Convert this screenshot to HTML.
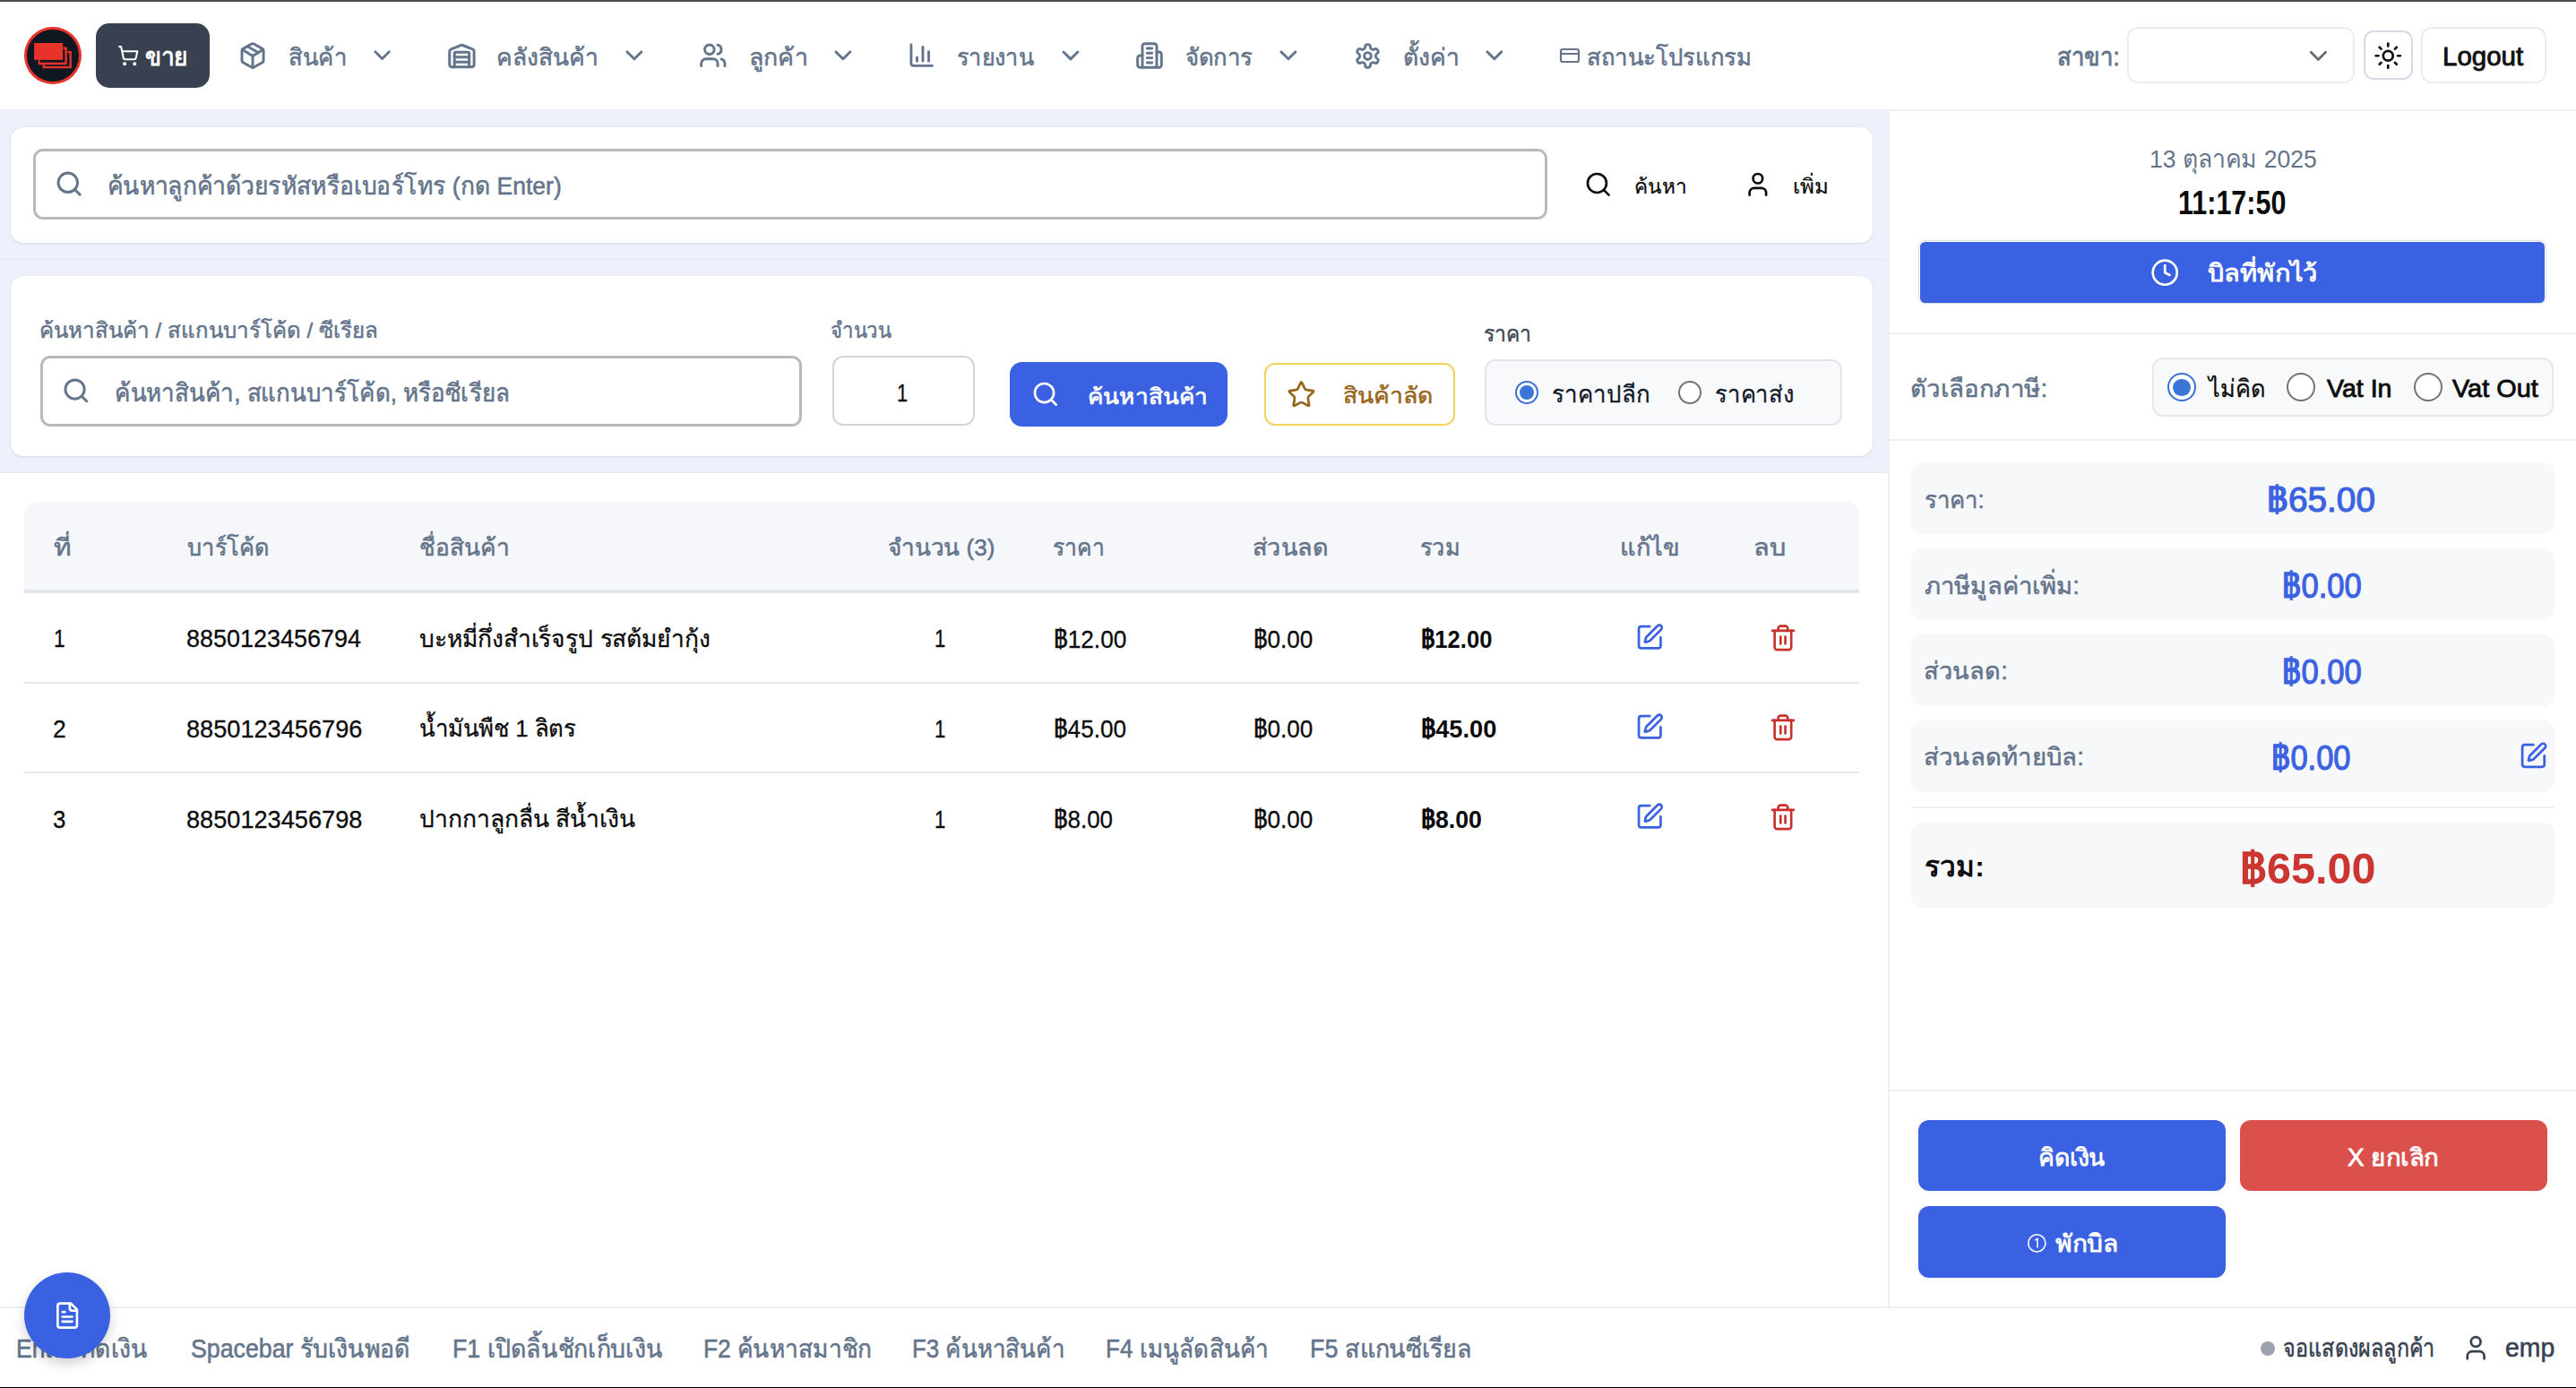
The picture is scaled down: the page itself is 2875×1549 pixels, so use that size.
<!DOCTYPE html>
<html lang="th"><head><meta charset="utf-8"><title>POS</title>
<style>
html,body{margin:0;padding:0}
body{width:2875px;height:1549px;position:relative;overflow:hidden;background:#fff;font-family:"Liberation Sans",sans-serif}
body>div,body>svg,body>p{position:absolute;margin:0}
p{line-height:120px;white-space:nowrap;transform-origin:0 0}
</style></head><body>
<div style="left:0px;top:0px;width:2875px;height:2px;background:#4d4d4d"></div>
<div style="left:0px;top:2px;width:2875px;height:120px;background:#fff"></div>
<div style="left:0px;top:122px;width:2875px;height:2px;background:#eceff4"></div>
<div style="left:0px;top:124px;width:2107px;height:403.5px;background:#eef1fb"></div>
<div style="left:0px;top:288.5px;width:2107px;height:1.0px;background:#e4e8f2"></div>
<div style="left:0px;top:526.5px;width:2107px;height:1.0px;background:#e6eaf3"></div>
<div style="left:12px;top:141.5px;width:2078px;height:129.8px;background:#fff;border-radius:14px;box-shadow:0 1px 3px rgba(30,40,80,.10),0 0 1px rgba(30,40,80,.10)"></div>
<div style="left:12px;top:307.8px;width:2078px;height:201.0px;background:#fff;border-radius:14px;box-shadow:0 1px 3px rgba(30,40,80,.10),0 0 1px rgba(30,40,80,.10)"></div>
<div style="left:2107px;top:124px;width:2px;height:1334.5px;background:#eef0f5"></div>
<div style="left:2109px;top:371px;width:766px;height:2px;background:#eceff5"></div>
<div style="left:2109px;top:490px;width:766px;height:2px;background:#eceff5"></div>
<div style="left:2109px;top:1216px;width:766px;height:2px;background:#eceff5"></div>
<div style="left:0px;top:1458px;width:2875px;height:2px;background:#eef0f4"></div>
<div style="left:0px;top:1547.5px;width:2875px;height:1.5px;background:#000"></div>
<div style="left:27.3px;top:30.1px;width:63.5px;height:63.8px;background:#0f1720;border:3.8px solid #e8322a;border-radius:50%;box-sizing:border-box"></div>
<svg style="left:27px;top:30px" width="64" height="64" viewBox="27 30 64 64"><rect x="38.1" y="48" width="32.1" height="18.9" fill="#e8322a"/><path d="M43.8 67.4 V71 H73.6 V53.8 H70.8" fill="none" stroke="#e8322a" stroke-width="2.4"/><path d="M48.8 72.2 V75.1 H78.7 V58.1 H75.2" fill="none" stroke="#e8322a" stroke-width="2.4"/></svg>
<div style="left:107px;top:25.9px;width:126.8px;height:72.0px;background:#394150;border-radius:15px"></div>
<svg style="left:130.74px;top:49.84px" width="24.33" height="24.33" viewBox="0 0 24 24" fill="none" stroke="#fff" stroke-width="2" stroke-linecap="round" stroke-linejoin="round"><circle cx="8" cy="21" r="1"/><circle cx="19" cy="21" r="1"/><path d="M2.05 2.05h2l2.66 12.42a2 2 0 0 0 2 1.58h9.78a2 2 0 0 0 1.95-1.57l1.65-7.43H5.12"/></svg>
<svg style="left:265.82px;top:45.66px" width="32.1" height="32.1" viewBox="0 0 24 24" fill="none" stroke="#64748b" stroke-width="2.2" stroke-linecap="round" stroke-linejoin="round"><path d="M11 21.73a2 2 0 0 0 2 0l7-4A2 2 0 0 0 21 16V8a2 2 0 0 0-1-1.73l-7-4a2 2 0 0 0-2 0l-7 4A2 2 0 0 0 3 8v8a2 2 0 0 0 1 1.73z"/><path d="M12 22V12"/><path d="m3.3 7 7.703 4.734a2 2 0 0 0 1.994 0L20.7 7"/><path d="m7.5 4.27 9 5.15"/></svg>
<svg style="left:411.11px;top:46.42px" width="31.14" height="31.14" viewBox="0 0 24 24" fill="none" stroke="#64748b" stroke-width="2.2" stroke-linecap="round" stroke-linejoin="round"><path d="m6 9 6 6 6-6"/></svg>
<svg style="left:498.93px;top:46.12px" width="32.87" height="32.87" viewBox="0 0 24 24" fill="none" stroke="#64748b" stroke-width="2.2" stroke-linecap="round" stroke-linejoin="round"><path d="M18 21V10a1 1 0 0 0-1-1H7a1 1 0 0 0-1 1v11"/><path d="M22 19a2 2 0 0 1-2 2H4a2 2 0 0 1-2-2V8.35a2 2 0 0 1 1.26-1.86l8-3.2a2 2 0 0 1 1.48 0l8 3.2A2 2 0 0 1 22 8.35z"/><path d="M6 13h12"/><path d="M6 17h12"/></svg>
<svg style="left:691.88px;top:45.81px" width="31.76" height="31.76" viewBox="0 0 24 24" fill="none" stroke="#64748b" stroke-width="2.2" stroke-linecap="round" stroke-linejoin="round"><path d="m6 9 6 6 6-6"/></svg>
<svg style="left:779.68px;top:46.37px" width="31.58" height="31.58" viewBox="0 0 24 24" fill="none" stroke="#64748b" stroke-width="2.2" stroke-linecap="round" stroke-linejoin="round"><path d="M16 21v-2a4 4 0 0 0-4-4H6a4 4 0 0 0-4 4v2"/><circle cx="9" cy="7" r="4"/><path d="M22 21v-2a4 4 0 0 0-3-3.87"/><path d="M16 3.13a4 4 0 0 1 0 7.75"/></svg>
<svg style="left:925.38px;top:45.81px" width="31.76" height="31.76" viewBox="0 0 24 24" fill="none" stroke="#64748b" stroke-width="2.2" stroke-linecap="round" stroke-linejoin="round"><path d="m6 9 6 6 6-6"/></svg>
<svg style="left:1013.19px;top:46.39px" width="31.32" height="31.32" viewBox="0 0 24 24" fill="none" stroke="#64748b" stroke-width="2.2" stroke-linecap="round" stroke-linejoin="round"><path d="M3 3v16a2 2 0 0 0 2 2h16"/><path d="M18 17V9"/><path d="M13 17V5"/><path d="M8 17v-3"/></svg>
<svg style="left:1178.97px;top:45.79px" width="31.84" height="31.84" viewBox="0 0 24 24" fill="none" stroke="#64748b" stroke-width="2.2" stroke-linecap="round" stroke-linejoin="round"><path d="m6 9 6 6 6-6"/></svg>
<svg style="left:1266.97px;top:45.67px" width="31.96" height="31.96" viewBox="0 0 24 24" fill="none" stroke="#64748b" stroke-width="2.2" stroke-linecap="round" stroke-linejoin="round"><path d="M6 22V4a2 2 0 0 1 2-2h8a2 2 0 0 1 2 2v18Z"/><path d="M6 12H4a2 2 0 0 0-2 2v6a2 2 0 0 0 2 2h2"/><path d="M18 9h2a2 2 0 0 1 2 2v9a2 2 0 0 1-2 2h-2"/><path d="M10 6h4"/><path d="M10 10h4"/><path d="M10 14h4"/><path d="M10 18h4"/></svg>
<svg style="left:1421.88px;top:45.81px" width="31.76" height="31.76" viewBox="0 0 24 24" fill="none" stroke="#64748b" stroke-width="2.2" stroke-linecap="round" stroke-linejoin="round"><path d="m6 9 6 6 6-6"/></svg>
<svg style="left:1510.72px;top:46.51px" width="30.96" height="30.96" viewBox="0 0 24 24" fill="none" stroke="#64748b" stroke-width="2.2" stroke-linecap="round" stroke-linejoin="round"><path d="M12.22 2h-.44a2 2 0 0 0-2 2v.18a2 2 0 0 1-1 1.73l-.43.25a2 2 0 0 1-2 0l-.15-.08a2 2 0 0 0-2.73.73l-.22.38a2 2 0 0 0 .73 2.73l.15.1a2 2 0 0 1 1 1.72v.51a2 2 0 0 1-1 1.74l-.15.09a2 2 0 0 0-.73 2.73l.22.38a2 2 0 0 0 2.73.73l.15-.08a2 2 0 0 1 2 0l.43.25a2 2 0 0 1 1 1.73V20a2 2 0 0 0 2 2h.44a2 2 0 0 0 2-2v-.18a2 2 0 0 1 1-1.73l.43-.25a2 2 0 0 1 2 0l.15.08a2 2 0 0 0 2.73-.73l.22-.39a2 2 0 0 0-.73-2.73l-.15-.08a2 2 0 0 1-1-1.74v-.5a2 2 0 0 1 1-1.74l.15-.09a2 2 0 0 0 .73-2.73l-.22-.38a2 2 0 0 0-2.73-.73l-.15.08a2 2 0 0 1-2 0l-.43-.25a2 2 0 0 1-1-1.73V4a2 2 0 0 0-2-2z"/><circle cx="12" cy="12" r="3"/></svg>
<svg style="left:1652.3px;top:45.84px" width="31.67" height="31.67" viewBox="0 0 24 24" fill="none" stroke="#64748b" stroke-width="2.2" stroke-linecap="round" stroke-linejoin="round"><path d="m6 9 6 6 6-6"/></svg>
<svg style="left:1740.0px;top:49.8px" width="23.99" height="23.99" viewBox="0 0 24 24" fill="none" stroke="#64748b" stroke-width="2.2" stroke-linecap="round" stroke-linejoin="round"><rect width="20" height="14" x="2" y="5" rx="2"/><line x1="2" x2="22" y1="10" y2="10"/></svg>
<div style="left:2373.6px;top:30.4px;width:254.7px;height:63.1px;border:2px solid #eaedf2;border-radius:12px;box-sizing:border-box;background:#fff"></div>
<svg style="left:2571.17px;top:45.56px" width="32.81" height="32.81" viewBox="0 0 24 24" fill="none" stroke="#6b6b6b" stroke-width="2" stroke-linecap="round" stroke-linejoin="round"><path d="m6 9 6 6 6-6"/></svg>
<div style="left:2637.6px;top:34.3px;width:55.0px;height:55.0px;border:2px solid #d5dbe6;border-radius:11px;box-sizing:border-box;background:#fff"></div>
<svg style="left:2648.65px;top:45.65px" width="32.51" height="32.51" viewBox="0 0 24 24" fill="none" stroke="#111" stroke-width="2" stroke-linecap="round" stroke-linejoin="round"><circle cx="12" cy="12" r="4"/><path d="M12 2v2"/><path d="M12 20v2"/><path d="m4.93 4.93 1.41 1.41"/><path d="m17.66 17.66 1.41 1.41"/><path d="M2 12h2"/><path d="M20 12h2"/><path d="m6.34 17.66-1.41 1.41"/><path d="m19.07 4.93-1.41 1.41"/></svg>
<div style="left:2701.6px;top:30.4px;width:140.9px;height:63.1px;border:2px solid #eaedf2;border-radius:12px;box-sizing:border-box;background:#fff"></div>
<div style="left:36.8px;top:166.3px;width:1690.6px;height:79.2px;border:3px solid #b9b9b9;border-radius:11px;box-sizing:border-box;background:#fff"></div>
<svg style="left:60.81px;top:189.31px" width="32.28" height="32.28" viewBox="0 0 24 24" fill="none" stroke="#64748b" stroke-width="2.2" stroke-linecap="round" stroke-linejoin="round"><circle cx="11" cy="11" r="8"/><path d="m21 21-4.3-4.3"/></svg>
<svg style="left:1768.17px;top:189.88px" width="31.5" height="31.5" viewBox="0 0 24 24" fill="none" stroke="#0b0b0b" stroke-width="2" stroke-linecap="round" stroke-linejoin="round"><circle cx="11" cy="11" r="8"/><path d="m21 21-4.3-4.3"/></svg>
<svg style="left:1945.71px;top:190.16px" width="31.72" height="31.72" viewBox="0 0 24 24" fill="none" stroke="#0b0b0b" stroke-width="2" stroke-linecap="round" stroke-linejoin="round"><path d="M19 21v-2a4 4 0 0 0-4-4H9a4 4 0 0 0-4 4v2"/><circle cx="12" cy="7" r="4"/></svg>
<div style="left:45.1px;top:396.6px;width:849.9px;height:79.0px;border:3px solid #b9b9b9;border-radius:11px;box-sizing:border-box;background:#fff"></div>
<svg style="left:68.85px;top:420.05px" width="31.8" height="31.8" viewBox="0 0 24 24" fill="none" stroke="#64748b" stroke-width="2.2" stroke-linecap="round" stroke-linejoin="round"><circle cx="11" cy="11" r="8"/><path d="m21 21-4.3-4.3"/></svg>
<div style="left:928.5px;top:396.7px;width:159.2px;height:78.2px;border:2px solid #d1d5db;border-radius:12px;box-sizing:border-box;background:#fff"></div>
<div style="left:1126.9px;top:404px;width:243.1px;height:71.9px;background:#3961e1;border-radius:14px;box-shadow:0 1px 2px rgba(0,0,0,.08)"></div>
<svg style="left:1151.06px;top:424.16px" width="31.68" height="31.68" viewBox="0 0 24 24" fill="none" stroke="#fff" stroke-width="2" stroke-linecap="round" stroke-linejoin="round"><circle cx="11" cy="11" r="8"/><path d="m21 21-4.3-4.3"/></svg>
<div style="left:1410.7px;top:404.8px;width:213.6px;height:70.2px;border:2px solid #f2d35e;border-radius:12px;box-sizing:border-box;background:#fff"></div>
<svg style="left:1435.53px;top:423.5px" width="32.79" height="32.79" viewBox="0 0 24 24" fill="none" stroke="#97661c" stroke-width="2" stroke-linecap="round" stroke-linejoin="round"><path d="M11.525 2.295a.53.53 0 0 1 .95 0l2.31 4.679a2.123 2.123 0 0 0 1.595 1.16l5.166.756a.53.53 0 0 1 .294.904l-3.736 3.638a2.123 2.123 0 0 0-.611 1.878l.882 5.14a.53.53 0 0 1-.771.56l-4.618-2.428a2.122 2.122 0 0 0-1.973 0L6.396 21.01a.53.53 0 0 1-.77-.56l.881-5.139a2.122 2.122 0 0 0-.611-1.879L2.16 9.795a.53.53 0 0 1 .294-.906l5.165-.755a2.122 2.122 0 0 0 1.597-1.16z"/></svg>
<div style="left:1657.4px;top:400.6px;width:399.1px;height:74.4px;border:2px solid #e3e5ea;border-radius:12px;box-sizing:border-box;background:#f8f9fb"></div>
<div style="left:1691px;top:425px;width:26.2px;height:26.2px;border:2px solid #3b6fd6;border-radius:50%;box-sizing:border-box;background:#fff"></div><div style="left:1696.11px;top:430.11px;width:15.98px;height:15.98px;background:#3b76d6;border-radius:50%"></div>
<div style="left:1873px;top:425px;width:26.2px;height:26.2px;border:2px solid #737373;border-radius:50%;box-sizing:border-box;background:#fff"></div>
<div style="left:27px;top:560px;width:2048px;height:98.3px;background:#f5f7fa;border-radius:14px 14px 0 0"></div>
<div style="left:27px;top:658.3px;width:2048px;height:3.7px;background:#e2e7ef"></div>
<div style="left:27px;top:761px;width:2048px;height:2px;background:#e3e7ee"></div>
<div style="left:27px;top:861px;width:2048px;height:2px;background:#e3e7ee"></div>
<svg style="left:1825.19px;top:694.84px" width="32.47" height="32.47" viewBox="0 0 24 24" fill="none" stroke="#3a62e0" stroke-width="2" stroke-linecap="round" stroke-linejoin="round"><path d="M12 3H5a2 2 0 0 0-2 2v14a2 2 0 0 0 2 2h14a2 2 0 0 0 2-2v-7"/><path d="M18.375 2.625a1 1 0 0 1 3 3l-9.013 9.014a2 2 0 0 1-.853.505l-2.873.84a.5.5 0 0 1-.62-.62l.84-2.873a2 2 0 0 1 .506-.852z"/></svg>
<svg style="left:1974.25px;top:695.67px" width="31.8" height="31.8" viewBox="0 0 24 24" fill="none" stroke="#c9302c" stroke-width="2" stroke-linecap="round" stroke-linejoin="round"><path d="M3 6h18"/><path d="M19 6v14c0 1-1 2-2 2H7c-1 0-2-1-2-2V6"/><path d="M8 6V4c0-1 1-2 2-2h4c1 0 2 1 2 2v2"/><line x1="10" x2="10" y1="11" y2="17"/><line x1="14" x2="14" y1="11" y2="17"/></svg>
<svg style="left:1825.19px;top:795.14px" width="32.47" height="32.47" viewBox="0 0 24 24" fill="none" stroke="#3a62e0" stroke-width="2" stroke-linecap="round" stroke-linejoin="round"><path d="M12 3H5a2 2 0 0 0-2 2v14a2 2 0 0 0 2 2h14a2 2 0 0 0 2-2v-7"/><path d="M18.375 2.625a1 1 0 0 1 3 3l-9.013 9.014a2 2 0 0 1-.853.505l-2.873.84a.5.5 0 0 1-.62-.62l.84-2.873a2 2 0 0 1 .506-.852z"/></svg>
<svg style="left:1974.25px;top:795.97px" width="31.8" height="31.8" viewBox="0 0 24 24" fill="none" stroke="#c9302c" stroke-width="2" stroke-linecap="round" stroke-linejoin="round"><path d="M3 6h18"/><path d="M19 6v14c0 1-1 2-2 2H7c-1 0-2-1-2-2V6"/><path d="M8 6V4c0-1 1-2 2-2h4c1 0 2 1 2 2v2"/><line x1="10" x2="10" y1="11" y2="17"/><line x1="14" x2="14" y1="11" y2="17"/></svg>
<svg style="left:1825.19px;top:895.44px" width="32.47" height="32.47" viewBox="0 0 24 24" fill="none" stroke="#3a62e0" stroke-width="2" stroke-linecap="round" stroke-linejoin="round"><path d="M12 3H5a2 2 0 0 0-2 2v14a2 2 0 0 0 2 2h14a2 2 0 0 0 2-2v-7"/><path d="M18.375 2.625a1 1 0 0 1 3 3l-9.013 9.014a2 2 0 0 1-.853.505l-2.873.84a.5.5 0 0 1-.62-.62l.84-2.873a2 2 0 0 1 .506-.852z"/></svg>
<svg style="left:1974.25px;top:896.27px" width="31.8" height="31.8" viewBox="0 0 24 24" fill="none" stroke="#c9302c" stroke-width="2" stroke-linecap="round" stroke-linejoin="round"><path d="M3 6h18"/><path d="M19 6v14c0 1-1 2-2 2H7c-1 0-2-1-2-2V6"/><path d="M8 6V4c0-1 1-2 2-2h4c1 0 2 1 2 2v2"/><line x1="10" x2="10" y1="11" y2="17"/><line x1="14" x2="14" y1="11" y2="17"/></svg>
<div style="left:2141.2px;top:268.2px;width:701.0px;height:71.2px;border:1.2px solid #d9dfe9;border-radius:7px;box-sizing:border-box;background:#fff"></div>
<div style="left:2142.9px;top:269.9px;width:697.6px;height:67.8px;background:#3961e1;border-radius:5.5px"></div>
<svg style="left:2399.65px;top:288.15px" width="32.45" height="32.45" viewBox="0 0 24 24" fill="none" stroke="#fff" stroke-width="2" stroke-linecap="round" stroke-linejoin="round"><circle cx="12" cy="12" r="10"/><polyline points="12 6 12 12 16 14"/></svg>
<div style="left:2401.7px;top:398.5px;width:448.4px;height:66.8px;border:2px solid #e6e8ec;border-radius:12px;box-sizing:border-box;background:#f8f9fb"></div>
<div style="left:2418.9px;top:416.3px;width:32.0px;height:32.0px;border:2px solid #3b6fd6;border-radius:50%;box-sizing:border-box;background:#fff"></div><div style="left:2425.14px;top:422.54px;width:19.52px;height:19.52px;background:#3b76d6;border-radius:50%"></div>
<div style="left:2552px;top:416.3px;width:32px;height:32.0px;border:2px solid #737373;border-radius:50%;box-sizing:border-box;background:#fff"></div>
<div style="left:2693.6px;top:416.3px;width:32.0px;height:32.0px;border:2px solid #737373;border-radius:50%;box-sizing:border-box;background:#fff"></div>
<div style="left:2133px;top:516.4px;width:718px;height:79.2px;background:#f7f8fa;border-radius:12px"></div>
<div style="left:2133px;top:612.4px;width:718px;height:79.2px;background:#f7f8fa;border-radius:12px"></div>
<div style="left:2133px;top:708px;width:718px;height:79.5px;background:#f7f8fa;border-radius:12px"></div>
<div style="left:2133px;top:804px;width:718px;height:79.8px;background:#f7f8fa;border-radius:12px"></div>
<svg style="left:2810.86px;top:827.11px" width="32.88" height="32.88" viewBox="0 0 24 24" fill="none" stroke="#3a62e0" stroke-width="2" stroke-linecap="round" stroke-linejoin="round"><path d="M12 3H5a2 2 0 0 0-2 2v14a2 2 0 0 0 2 2h14a2 2 0 0 0 2-2v-7"/><path d="M18.375 2.625a1 1 0 0 1 3 3l-9.013 9.014a2 2 0 0 1-.853.505l-2.873.84a.5.5 0 0 1-.62-.62l.84-2.873a2 2 0 0 1 .506-.852z"/></svg>
<div style="left:2133px;top:900px;width:718px;height:2px;background:#edf0f6"></div>
<div style="left:2133px;top:918.1px;width:718px;height:95.3px;background:#f7f8fa;border-radius:12px"></div>
<div style="left:2141.1px;top:1250.4px;width:342.9px;height:79.1px;background:#3961e1;border-radius:12px"></div>
<div style="left:2500.1px;top:1250.4px;width:342.9px;height:79.1px;background:#dc504c;border-radius:12px"></div>
<div style="left:2141.1px;top:1346px;width:342.9px;height:79.7px;background:#3961e1;border-radius:12px"></div>
<svg style="left:2262px;top:1376px" width="24" height="24" viewBox="0 0 24 24"><circle cx="11.3" cy="11.4" r="9.6" fill="none" stroke="#fff" stroke-width="1.6"/><path d="M9.3 8.2 L11.9 6.4 V16.6" fill="none" stroke="#fff" stroke-width="1.5"/></svg>
<div style="left:2523px;top:1496.6px;width:16.4px;height:16.4px;background:#9ca3af;border-radius:50%"></div>
<svg style="left:2747.11px;top:1488.0px" width="32.35" height="32.35" viewBox="0 0 24 24" fill="none" stroke="#374151" stroke-width="2" stroke-linecap="round" stroke-linejoin="round"><path d="M19 21v-2a4 4 0 0 0-4-4H9a4 4 0 0 0-4 4v2"/><circle cx="12" cy="7" r="4"/></svg>
<p style="left:321.75px;top:3.70px;font-size:26.4px;font-weight:400;-webkit-text-stroke:0.53px #64748b;color:#64748b;transform:scaleX(0.9730)">สินค้า</p>
<p style="left:554.40px;top:3.70px;font-size:26.4px;font-weight:400;-webkit-text-stroke:0.53px #64748b;color:#64748b;transform:scaleX(1.0000)">คลังสินค้า</p>
<p style="left:835.58px;top:3.70px;font-size:26.4px;font-weight:400;-webkit-text-stroke:0.53px #64748b;color:#64748b;transform:scaleX(1.0115)">ลูกค้า</p>
<p style="left:1068.04px;top:3.70px;font-size:26.4px;font-weight:400;-webkit-text-stroke:0.53px #64748b;color:#64748b;transform:scaleX(0.9551)">รายงาน</p>
<p style="left:1322.65px;top:3.70px;font-size:26.4px;font-weight:400;-webkit-text-stroke:0.53px #64748b;color:#64748b;transform:scaleX(0.9733)">จัดการ</p>
<p style="left:1565.59px;top:3.80px;font-size:26.4px;font-weight:400;-webkit-text-stroke:0.53px #64748b;color:#64748b;transform:scaleX(1.0034)">ตั้งค่า</p>
<p style="left:1771.45px;top:3.80px;font-size:26.4px;font-weight:400;-webkit-text-stroke:0.53px #64748b;color:#64748b;transform:scaleX(0.9761)">สถานะโปรแกรม</p>
<p style="left:2296.38px;top:4.10px;font-size:28.0px;font-weight:400;-webkit-text-stroke:0.84px #64748b;color:#64748b;transform:scaleX(0.9178)">สาขา:</p>
<p style="left:2725.97px;top:3.10px;font-size:29.0px;font-weight:400;-webkit-text-stroke:0.87px #111111;color:#111111;transform:scaleX(1.0161)">Logout</p>
<p style="left:162.07px;top:3.30px;font-size:28.5px;font-weight:700;color:#ffffff;transform:scaleX(0.9265)">ขาย</p>
<p style="left:119.97px;top:148.40px;font-size:27.5px;font-weight:400;-webkit-text-stroke:0.55px #64748b;color:#64748b;transform:scaleX(0.9627)">ค้นหาลูกค้าด้วยรหัสหรือเบอร์โทร (กด Enter)</p>
<p style="left:1823.70px;top:147.60px;font-size:22.7px;font-weight:400;-webkit-text-stroke:0.23px #0b0b0b;color:#0b0b0b;transform:scaleX(0.9982)">ค้นหา</p>
<p style="left:2001.08px;top:147.60px;font-size:22.7px;font-weight:400;-webkit-text-stroke:0.23px #0b0b0b;color:#0b0b0b;transform:scaleX(1.0618)">เพิ่ม</p>
<p style="left:43.80px;top:308.80px;font-size:24.1px;font-weight:400;-webkit-text-stroke:0.48px #64748b;color:#64748b;transform:scaleX(0.9992)">ค้นหาสินค้า / สแกนบาร์โค้ด / ซีเรียล</p>
<p style="left:128.34px;top:378.60px;font-size:27.9px;font-weight:400;-webkit-text-stroke:0.56px #64748b;color:#64748b;transform:scaleX(0.9311)">ค้นหาสินค้า, สแกนบาร์โค้ด, หรือซีเรียล</p>
<p style="left:926.67px;top:308.50px;font-size:24.1px;font-weight:400;-webkit-text-stroke:0.48px #64748b;color:#64748b;transform:scaleX(0.9167)">จำนวน</p>
<p style="left:1001.15px;top:378.70px;font-size:28.0px;font-weight:400;-webkit-text-stroke:0.28px #0b0b0b;color:#0b0b0b;transform:scaleX(0.7750)">1</p>
<p style="left:1213.65px;top:383.00px;font-size:24.3px;font-weight:400;-webkit-text-stroke:0.73px #ffffff;color:#ffffff;transform:scaleX(1.0744)">ค้นหาสินค้า</p>
<p style="left:1499.23px;top:381.30px;font-size:25.0px;font-weight:400;-webkit-text-stroke:0.50px #97661c;color:#97661c;transform:scaleX(1.0659)">สินค้าลัด</p>
<p style="left:1655.85px;top:313.30px;font-size:24.0px;font-weight:400;-webkit-text-stroke:0.48px #434a54;color:#434a54;transform:scaleX(0.9538)">ราคา</p>
<p style="left:1732.20px;top:379.90px;font-size:26.0px;font-weight:400;-webkit-text-stroke:0.26px #111827;color:#111827;transform:scaleX(0.9963)">ราคาปลีก</p>
<p style="left:1914.02px;top:379.90px;font-size:26.0px;font-weight:400;-webkit-text-stroke:0.26px #111827;color:#111827;transform:scaleX(0.9828)">ราคาส่ง</p>
<p style="left:59.67px;top:550.60px;font-size:26.3px;font-weight:400;-webkit-text-stroke:0.53px #64748b;color:#64748b;transform:scaleX(1.1333)">ที่</p>
<p style="left:208.84px;top:550.60px;font-size:26.3px;font-weight:400;-webkit-text-stroke:0.53px #64748b;color:#64748b;transform:scaleX(0.9630)">บาร์โค้ด</p>
<p style="left:467.50px;top:550.60px;font-size:26.3px;font-weight:400;-webkit-text-stroke:0.53px #64748b;color:#64748b;transform:scaleX(0.9979)">ชื่อสินค้า</p>
<p style="left:991.02px;top:550.60px;font-size:26.3px;font-weight:400;-webkit-text-stroke:0.53px #64748b;color:#64748b;transform:scaleX(0.9915)">จำนวน (3)</p>
<p style="left:1175.16px;top:550.60px;font-size:26.3px;font-weight:400;-webkit-text-stroke:0.53px #64748b;color:#64748b;transform:scaleX(0.9390)">ราคา</p>
<p style="left:1398.35px;top:550.60px;font-size:26.3px;font-weight:400;-webkit-text-stroke:0.53px #64748b;color:#64748b;transform:scaleX(1.0244)">ส่วนลด</p>
<p style="left:1584.64px;top:550.60px;font-size:26.3px;font-weight:400;-webkit-text-stroke:0.53px #64748b;color:#64748b;transform:scaleX(0.9628)">รวม</p>
<p style="left:1808.43px;top:550.90px;font-size:26.3px;font-weight:400;-webkit-text-stroke:0.53px #64748b;color:#64748b;transform:scaleX(1.0333)">แก้ไข</p>
<p style="left:1957.31px;top:550.90px;font-size:26.3px;font-weight:400;-webkit-text-stroke:0.53px #64748b;color:#64748b;transform:scaleX(1.0966)">ลบ</p>
<p style="left:60.40px;top:652.40px;font-size:28.5px;font-weight:400;-webkit-text-stroke:0.29px #0b0b0b;color:#0b0b0b;transform:scaleX(0.8000)">1</p>
<p style="left:208.15px;top:652.40px;font-size:28.5px;font-weight:400;-webkit-text-stroke:0.29px #0b0b0b;color:#0b0b0b;transform:scaleX(0.9468)">8850123456794</p>
<p style="left:468.30px;top:653.20px;font-size:26.5px;font-weight:400;-webkit-text-stroke:0.27px #0b0b0b;color:#0b0b0b;transform:scaleX(0.9960)">บะหมี่กึ่งสำเร็จรูป รสต้มยำกุ้ง</p>
<p style="left:1043.05px;top:652.40px;font-size:28.5px;font-weight:400;-webkit-text-stroke:0.29px #0b0b0b;color:#0b0b0b;transform:scaleX(0.7769)">1</p>
<p style="left:1175.66px;top:652.60px;font-size:28.5px;font-weight:400;-webkit-text-stroke:0.29px #0b0b0b;color:#0b0b0b;transform:scaleX(0.9209)">฿12.00</p>
<p style="left:1399.17px;top:652.60px;font-size:28.5px;font-weight:400;-webkit-text-stroke:0.29px #0b0b0b;color:#0b0b0b;transform:scaleX(0.9143)">฿0.00</p>
<p style="left:1585.70px;top:652.60px;font-size:28.5px;font-weight:700;color:#0b0b0b;transform:scaleX(0.8988)">฿12.00</p>
<p style="left:58.97px;top:752.70px;font-size:28.5px;font-weight:400;-webkit-text-stroke:0.29px #0b0b0b;color:#0b0b0b;transform:scaleX(0.9286)">2</p>
<p style="left:208.05px;top:752.70px;font-size:28.5px;font-weight:400;-webkit-text-stroke:0.29px #0b0b0b;color:#0b0b0b;transform:scaleX(0.9529)">8850123456796</p>
<p style="left:468.33px;top:753.40px;font-size:26.5px;font-weight:400;-webkit-text-stroke:0.27px #0b0b0b;color:#0b0b0b;transform:scaleX(0.9725)">น้ำมันพืช 1 ลิตร</p>
<p style="left:1043.05px;top:752.70px;font-size:28.5px;font-weight:400;-webkit-text-stroke:0.29px #0b0b0b;color:#0b0b0b;transform:scaleX(0.7769)">1</p>
<p style="left:1175.66px;top:752.70px;font-size:28.5px;font-weight:400;-webkit-text-stroke:0.29px #0b0b0b;color:#0b0b0b;transform:scaleX(0.9186)">฿45.00</p>
<p style="left:1399.17px;top:752.70px;font-size:28.5px;font-weight:400;-webkit-text-stroke:0.29px #0b0b0b;color:#0b0b0b;transform:scaleX(0.9143)">฿0.00</p>
<p style="left:1585.59px;top:752.70px;font-size:28.5px;font-weight:700;color:#0b0b0b;transform:scaleX(0.9547)">฿45.00</p>
<p style="left:58.99px;top:853.60px;font-size:28.5px;font-weight:400;-webkit-text-stroke:0.29px #0b0b0b;color:#0b0b0b;transform:scaleX(0.9071)">3</p>
<p style="left:208.05px;top:853.60px;font-size:28.5px;font-weight:400;-webkit-text-stroke:0.29px #0b0b0b;color:#0b0b0b;transform:scaleX(0.9529)">8850123456798</p>
<p style="left:468.30px;top:854.30px;font-size:26.5px;font-weight:400;-webkit-text-stroke:0.27px #0b0b0b;color:#0b0b0b;transform:scaleX(0.9987)">ปากกาลูกลื่น สีน้ำเงิน</p>
<p style="left:1043.05px;top:853.60px;font-size:28.5px;font-weight:400;-webkit-text-stroke:0.29px #0b0b0b;color:#0b0b0b;transform:scaleX(0.7769)">1</p>
<p style="left:1175.68px;top:853.60px;font-size:28.5px;font-weight:400;-webkit-text-stroke:0.29px #0b0b0b;color:#0b0b0b;transform:scaleX(0.9114)">฿8.00</p>
<p style="left:1399.17px;top:853.60px;font-size:28.5px;font-weight:400;-webkit-text-stroke:0.29px #0b0b0b;color:#0b0b0b;transform:scaleX(0.9143)">฿0.00</p>
<p style="left:1585.63px;top:853.60px;font-size:28.5px;font-weight:700;color:#0b0b0b;transform:scaleX(0.9357)">฿8.00</p>
<p style="left:2399.13px;top:116.80px;font-size:28.4px;font-weight:400;color:#64748b;transform:scaleX(0.9362)">13 ตุลาคม 2025</p>
<p style="left:2431.45px;top:166.50px;font-size:37.0px;font-weight:700;color:#0b0b0b;transform:scaleX(0.8245)">11:17:50</p>
<p style="left:2463.82px;top:244.90px;font-size:26.8px;font-weight:400;-webkit-text-stroke:0.80px #ffffff;color:#ffffff;transform:scaleX(1.0838)">บิลที่พักไว้</p>
<p style="left:2131.75px;top:374.00px;font-size:27.0px;font-weight:400;-webkit-text-stroke:0.54px #64748b;color:#64748b;transform:scaleX(1.0241)">ตัวเลือกภาษี:</p>
<p style="left:2465.28px;top:374.00px;font-size:27.0px;font-weight:400;-webkit-text-stroke:0.27px #0b0b0b;color:#0b0b0b;transform:scaleX(0.9397)">ไม่คิด</p>
<p style="left:2597.00px;top:374.00px;font-size:28.0px;font-weight:400;-webkit-text-stroke:0.84px #0b0b0b;color:#0b0b0b;transform:scaleX(1.0200)">Vat In</p>
<p style="left:2737.30px;top:374.00px;font-size:28.0px;font-weight:400;-webkit-text-stroke:0.84px #0b0b0b;color:#0b0b0b;transform:scaleX(1.0312)">Vat Out</p>
<p style="left:2147.85px;top:498.10px;font-size:27.1px;font-weight:400;-webkit-text-stroke:0.54px #64748b;color:#64748b;transform:scaleX(0.9463)">ราคา:</p>
<p style="left:2147.79px;top:593.80px;font-size:27.1px;font-weight:400;-webkit-text-stroke:0.54px #64748b;color:#64748b;transform:scaleX(1.0083)">ภาษีมูลค่าเพิ่ม:</p>
<p style="left:2146.79px;top:689.40px;font-size:27.1px;font-weight:400;-webkit-text-stroke:0.54px #64748b;color:#64748b;transform:scaleX(1.0034)">ส่วนลด:</p>
<p style="left:2146.77px;top:784.80px;font-size:27.1px;font-weight:400;-webkit-text-stroke:0.54px #64748b;color:#64748b;transform:scaleX(1.0134)">ส่วนลดท้ายบิล:</p>
<p style="left:2530.30px;top:498.40px;font-size:38.7px;font-weight:400;-webkit-text-stroke:1.16px #3b62e0;color:#3b62e0;transform:scaleX(1.0008)">฿65.00</p>
<p style="left:2547.02px;top:593.50px;font-size:38.7px;font-weight:400;-webkit-text-stroke:1.16px #3b62e0;color:#3b62e0;transform:scaleX(0.8948)">฿0.00</p>
<p style="left:2547.02px;top:689.70px;font-size:38.7px;font-weight:400;-webkit-text-stroke:1.16px #3b62e0;color:#3b62e0;transform:scaleX(0.8948)">฿0.00</p>
<p style="left:2534.92px;top:785.70px;font-size:38.7px;font-weight:400;-webkit-text-stroke:1.16px #3b62e0;color:#3b62e0;transform:scaleX(0.8917)">฿0.00</p>
<p style="left:2148.30px;top:908.20px;font-size:31.4px;font-weight:700;color:#0b0b0b;transform:scaleX(1.0000)">รวม:</p>
<p style="left:2499.51px;top:908.50px;font-size:48.8px;font-weight:700;color:#cc3630;transform:scaleX(0.9959)">฿65.00</p>
<p style="left:2274.72px;top:1231.60px;font-size:26.8px;font-weight:400;-webkit-text-stroke:0.80px #ffffff;color:#ffffff;transform:scaleX(0.9890)">คิดเงิน</p>
<p style="left:2620.16px;top:1231.50px;font-size:26.8px;font-weight:400;-webkit-text-stroke:0.80px #ffffff;color:#ffffff;transform:scaleX(1.0375)">X ยกเลิก</p>
<p style="left:2293.80px;top:1327.90px;font-size:27.0px;font-weight:400;-webkit-text-stroke:0.81px #ffffff;color:#ffffff;transform:scaleX(1.0394)">พักบิล</p>
<p style="left:18.35px;top:1444.70px;font-size:28.7px;font-weight:400;-webkit-text-stroke:0.57px #64748b;color:#64748b;transform:scaleX(0.9250)">Enter คิดเงิน</p>
<p style="left:213.47px;top:1444.70px;font-size:28.7px;font-weight:400;-webkit-text-stroke:0.57px #64748b;color:#64748b;transform:scaleX(0.9315)">Spacebar รับเงินพอดี</p>
<p style="left:504.74px;top:1444.70px;font-size:28.7px;font-weight:400;-webkit-text-stroke:0.57px #64748b;color:#64748b;transform:scaleX(0.9315)">F1 เปิดลิ้นชักเก็บเงิน</p>
<p style="left:785.16px;top:1444.70px;font-size:28.7px;font-weight:400;-webkit-text-stroke:0.57px #64748b;color:#64748b;transform:scaleX(0.9175)">F2 ค้นหาสมาชิก</p>
<p style="left:1018.20px;top:1444.70px;font-size:28.7px;font-weight:400;-webkit-text-stroke:0.57px #64748b;color:#64748b;transform:scaleX(0.9022)">F3 ค้นหาสินค้า</p>
<p style="left:1234.19px;top:1444.70px;font-size:28.7px;font-weight:400;-webkit-text-stroke:0.57px #64748b;color:#64748b;transform:scaleX(0.9066)">F4 เมนูลัดสินค้า</p>
<p style="left:1461.73px;top:1444.70px;font-size:28.7px;font-weight:400;-webkit-text-stroke:0.57px #64748b;color:#64748b;transform:scaleX(0.9362)">F5 สแกนซีเรียล</p>
<p style="left:2547.65px;top:1445.20px;font-size:27.5px;font-weight:400;-webkit-text-stroke:0.55px #374151;color:#374151;transform:scaleX(0.8495)">จอแสดงผลลูกค้า</p>
<p style="left:2796.02px;top:1444.20px;font-size:29.0px;font-weight:400;-webkit-text-stroke:0.58px #374151;color:#374151;transform:scaleX(0.9778)">emp</p>
<div style="left:27.3px;top:1419.8px;width:95.8px;height:96.2px;background:#3961e1;border-radius:50%;box-shadow:0 6px 14px rgba(0,0,0,.18)"></div>
<svg style="left:58.96px;top:1451.55px" width="32.31" height="32.31" viewBox="0 0 24 24" fill="none" stroke="#fff" stroke-width="2" stroke-linecap="round" stroke-linejoin="round"><path d="M15 2H6a2 2 0 0 0-2 2v16a2 2 0 0 0 2 2h12a2 2 0 0 0 2-2V7Z"/><path d="M14 2v4a2 2 0 0 0 2 2h4"/><path d="M10 9H8"/><path d="M16 13H8"/><path d="M16 17H8"/></svg>
</body></html>
